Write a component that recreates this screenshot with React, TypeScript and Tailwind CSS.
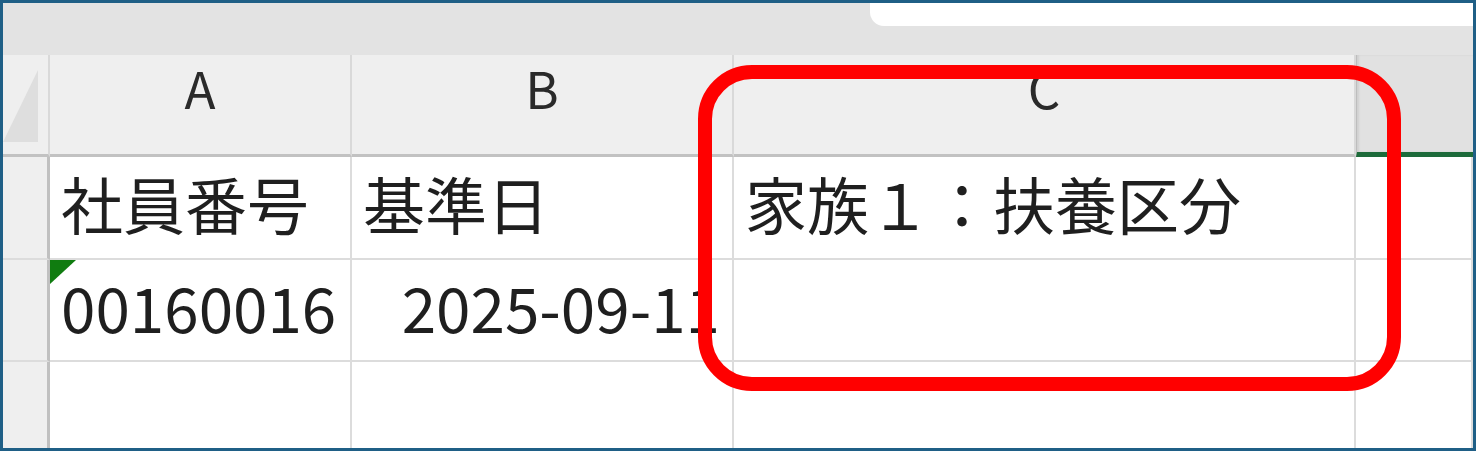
import React from "react";

const font = { fontFamily: '"Noto Sans CJK JP", "Noto Sans", sans-serif' };

// Top-left select-all corner with its little grey triangle
function CornerCell() {
    return (
        <div className="relative bg-[#efefef] border-r-2 border-r-[#d9d9d9] border-b-[3px] border-b-[#c2c2c2]">
            <svg className="absolute left-0 top-[15px]" width="35" height="72" viewBox="0 0 35 72">
                <polygon points="35,0 35,72 0,72" fill="#dedede" />
            </svg>
        </div>
    );
}

function ColHeader({ label }: { label: string }) {
    return (
        <div className="flex justify-center pt-0 bg-[#efefef] border-r-2 border-r-[#d9d9d9] border-b-[3px] border-b-[#c2c2c2] text-[51px] leading-[64px] text-[#2a2a2a]">
            {label}
        </div>
    );
}

function RowHeader({ last }: { last?: boolean }) {
    return (
        <div
            className={
                "bg-[#efefef] border-r-[3px] border-r-[#c0c0c0] " +
                (last ? "" : "border-b-2 border-b-[#dcdcdc]")
            }
        />
    );
}

function Cell({
    children,
    right,
    last,
    marker,
}: {
    children?: React.ReactNode;
    right?: boolean;
    last?: boolean;
    marker?: boolean;
}) {
    return (
        <div
            className={
                "relative flex items-center pb-[9px] bg-white border-r-2 border-r-[#dcdcdc] text-[62px] leading-none text-[#1f1f1f] whitespace-nowrap " +
                (right ? "justify-end pr-[12px] " : "pl-[11px] ") +
                (last ? "" : "border-b-2 border-b-[#dcdcdc]")
            }
        >
            {marker && (
                <svg className="absolute left-0 top-0" width="26" height="24" viewBox="0 0 26 24">
                    <polygon points="0,0 26,0 0,24" fill="#107c10" />
                </svg>
            )}
            {children}
        </div>
    );
}

export default function App() {
    return (
        <div
            className="relative w-[1476px] h-[451px] overflow-hidden border-[3px] border-[#1f5f86] bg-white"
            style={font}
        >
            {/* ribbon strip with the formula box */}
            <div className="flex h-[52px] bg-[#e3e3e3]">
                <div className="ml-auto w-[603px] h-[23px] bg-white rounded-bl-[14px]" />
            </div>

            <div className="grid grid-cols-[47px_302px_382px_622px_1fr] grid-rows-[102px_103px_102px_1fr] h-[393px]">
                <CornerCell />
                <ColHeader label="A" />
                <ColHeader label="B" />
                <ColHeader label="C" />
                <div className="bg-[#e1e1e1] border-l border-l-[#bdbdbd] border-b-[5px] border-b-[#1d6b3a] shadow-[inset_2px_0_2px_rgba(0,0,0,0.08)]" />

                <RowHeader />
                <Cell>社員番号</Cell>
                <Cell>基準日</Cell>
                <Cell>家族１：扶養区分</Cell>
                <Cell />

                <RowHeader />
                <Cell marker>00160016</Cell>
                <Cell right>2025-09-11</Cell>
                <Cell />
                <Cell />

                <RowHeader last />
                <Cell last />
                <Cell last />
                <Cell last />
                <Cell last />
            </div>

            {/* red callout around column C */}
            <div className="absolute left-[695px] top-[62px] w-[703px] h-[326px] rounded-[54px] border-[14px] border-[#ff0000]" />
        </div>
    );
}
